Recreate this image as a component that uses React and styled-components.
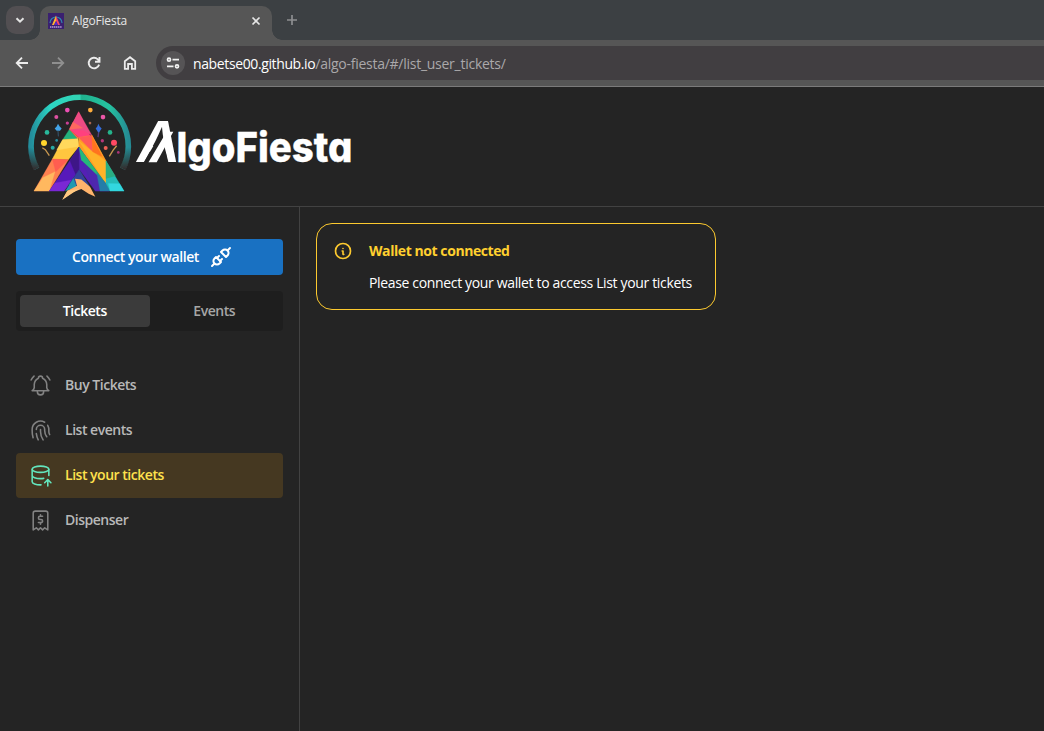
import React from "react";
import styled, { createGlobalStyle } from "styled-components";
import { TbBellRinging, TbFingerprint, TbReceipt2, TbInfoCircle, TbPlugConnected } from "react-icons/tb";

const GlobalStyle = createGlobalStyle`
  *, *::before, *::after { box-sizing: border-box; }
  body { margin: 0; background: #242424; font-family: "Open Sans", "Noto Sans", sans-serif; overflow: hidden; }
`;

const Window = styled.div`
  display: flex;
  flex-direction: column;
  height: 731px;
  background: #242424;
`;

const TabStrip = styled.div`
  display: flex;
  height: 40px;
  padding: 6px 0 0 6px;
  background: #3c4043;
`;

const TabSearch = styled.button`
  display: grid;
  place-items: center;
  width: 28px;
  height: 28px;
  padding: 0;
  border: 0;
  border-radius: 10px;
  background: #524f52;
  color: #e3e3e3;
`;

const Tab = styled.div`
  position: relative;
  display: flex;
  align-items: center;
  width: 232px;
  height: 34px;
  margin-left: 6px;
  padding: 0 10px 5px 8px;
  border-radius: 10px 10px 0 0;
  background: #565656;
  color: #e6e6e6;
  &::before, &::after {
    content: "";
    position: absolute;
    bottom: 0;
    width: 10px;
    height: 10px;
  }
  &::before { left: -10px; background: radial-gradient(circle at 0 0, transparent 9.5px, #565656 10px); }
  &::after { right: -10px; background: radial-gradient(circle at 100% 0, transparent 9.5px, #565656 10px); }
`;

const TabTitle = styled.span`
  flex: 1;
  margin-left: 8px;
  font-size: 12px;
  letter-spacing: -0.2px;
`;

const NewTab = styled.div`
  display: grid;
  place-items: center;
  width: 28px;
  height: 28px;
  margin-left: 6px;
  color: #8d8f91;
`;

const Toolbar = styled.div`
  display: flex;
  align-items: center;
  height: 47px;
  padding-left: 12px;
  background: #565656;
  border-bottom: 1px solid #7b7b7b;
`;

const NavButton = styled.div`
  display: grid;
  place-items: center;
  width: 20px;
  height: 20px;
  margin-right: 16px;
  color: ${(p) => (p.$dim ? "#8f8f8f" : "#ececec")};
`;

const AddressBar = styled.div`
  display: flex;
  flex: 1;
  align-items: center;
  height: 34px;
  padding-left: 5px;
  border-radius: 17px 0 0 17px;
  background: #413e41;
  color: #aaa8aa;
  font-size: 14px;
  letter-spacing: -0.26px;
`;

const SiteInfo = styled.span`
  display: grid;
  place-items: center;
  width: 24px;
  height: 24px;
  margin-right: 8px;
  border-radius: 50%;
  background: #565456;
  color: #f2f2f2;
`;

const Host = styled.span`
  color: #fff;
  letter-spacing: -0.38px;
`;

const Header = styled.header`
  height: 120px;
  padding: 1px 0 0 20px;
  border-bottom: 1px solid #424242;
  svg { display: block; }
`;

const Body = styled.div`
  display: flex;
  flex: 1;
`;

const Sidebar = styled.nav`
  width: 300px;
  padding: 32px 16px;
  border-right: 1px solid #424242;
`;

const ConnectButton = styled.button`
  display: flex;
  align-items: center;
  justify-content: center;
  gap: 10px;
  width: 267px;
  height: 36px;
  padding: 0 4px 0 10px;
  border: 0;
  border-radius: 4px;
  background: #1971c2;
  color: #fff;
  font: 600 14px "Open Sans", sans-serif;
  letter-spacing: -0.42px;
  span { padding-bottom: 1px; }
`;

const Segmented = styled.div`
  display: flex;
  height: 40px;
  margin: 16px 0 32px;
  padding: 4px;
  border-radius: 4px;
  background: #1e1e1e;
`;

const Segment = styled.div`
  flex: 1;
  border-radius: 4px;
  background: ${(p) => (p.$active ? "#3b3b3b" : "transparent")};
  color: ${(p) => (p.$active ? "#fff" : "#a6a6a6")};
  font-size: 14px;
  font-weight: 600;
  letter-spacing: -0.45px;
  line-height: 32px;
  text-align: center;
`;

const NavItem = styled.a`
  display: flex;
  align-items: center;
  height: 45px;
  padding: 0 12px;
  border-radius: 4px;
  background: ${(p) => (p.$active ? "#453821" : "transparent")};
  color: ${(p) => (p.$active ? "#ffe14d" : "#b8b8b8")};
  font-size: 14px;
  font-weight: 600;
  letter-spacing: -0.48px;
  span { padding-bottom: 2px; }
  svg {
    width: 25px;
    height: 25px;
    margin-right: 12px;
    color: ${(p) => (p.$active ? "#63e6be" : "#828282")};
    stroke-width: 1.5;
  }
`;

const Main = styled.main`
  padding: 16px;
`;

const Alert = styled.section`
  display: flex;
  width: 400px;
  height: 87px;
  padding: 17px 16px;
  border: 1px solid #fcc92f;
  border-radius: 16px;
  > svg { color: #fcc92f; margin-right: 16px; }
`;

const AlertTitle = styled.div`
  height: 20px;
  color: #ffd02f;
  font-size: 14px;
  font-weight: 700;
  line-height: 20px;
  letter-spacing: -0.43px;
`;

const AlertText = styled.div`
  margin-top: 12px;
  color: #fff;
  font-size: 14px;
  line-height: 20px;
  letter-spacing: -0.345px;
  white-space: nowrap;
`;

const Glyph = ({ size = 16, box = 16, width = 2, children }) => (
  <svg width={size} height={size} viewBox={`0 0 ${box} ${box}`} fill="none" stroke="currentColor" strokeWidth={width}>
    {children}
  </svg>
);

const DatabaseUp = () => (
  <svg viewBox="0 0 24 24" fill="none" stroke="currentColor" strokeLinecap="round" strokeLinejoin="round">
    <path d="M4 6c0 1.657 3.582 3 8 3s8-1.343 8-3-3.582-3-8-3-8 1.343-8 3" />
    <path d="M4 6v6c0 1.657 3.582 3 8 3 1.1 0 2.1-.08 3.1-.23M20 12V6M4 12v6c0 1.657 3.582 3 8 3 .17 0 .34 0 .5-.01M19 22v-6M22 19l-3-3-3 3" />
  </svg>
);

const Favicon = () => (
  <svg width="16" height="16" viewBox="0 0 16 16">
    <rect width="16" height="16" fill="#3a2070" />
    <path d="M2 10A6 6 0 0 1 14 10" fill="none" stroke="#2f87ad" strokeWidth="1.2" />
    <path d="M8 2.5L4 12h2l2-4z" fill="#ffb52d" />
    <path d="M8 2.5L12 12h-2L8 8z" fill="#f0476a" />
    <path d="M8 8l-2 4h4z" fill="#5727c8" />
    <path d="M2 14h12" stroke="#b39bd6" strokeWidth="1.3" strokeDasharray="1.4 .5" />
  </svg>
);

const dots = [
  [142, 65, 7, "#ed4fb4"], [109, 86, 6, "#df51a2"], [142, 104, 5, "#c93f94"], [81, 132, 7, "#29b99c"],
  [72, 164, 9, "#ffd52d"], [98, 178, 6, "#28aaa5"], [110, 156, 4, "#258e9f"], [211, 65, 7, "#ffae3d"],
  [249, 86, 7, "#ed57a8"], [210, 104, 4, "#aa654b"], [270, 132, 7, "#25b38b"], [247, 157, 5, "#b6377a"],
  [282, 163, 9, "#ff4963"], [257, 179, 6, "#ed6156"], [295, 192, 4, "#aa3476"],
];

const facets = [
  ["176,70 148,123 177,147 218,158", "#ff407e"],
  ["176,70 148,123 190,126 216,141", "#ef4b83"],
  ["159,101 148,123 188,119", "#ff695f"],
  ["148,123 128,154 174,151", "#23b17c"],
  ["148,123 177,147 174,152", "#ff6b43"],
  ["128,154 174,151 177,174 145,214 97,212", "#ffc63f"],
  ["128,154 110,185 177,174 174,151", "#ffd85c"],
  ["97,212 145,214 88,308 42,308", "#ff8050"],
  ["97,212 145,214 107,250", "#ff5d50"],
  ["42,308 68,268 105,250 88,308", "#ffb85f"],
  ["176,147 216,141 258,218 258,286 177,176", "#ff9c25"],
  ["216,141 176,147 218,190", "#ff5a58"],
  ["218,190 177,158 258,286 258,218", "#ffb329"],
  ["216,141 248,205 218,190", "#ff741f"],
  ["216,141 258,218 248,205", "#ff9c25"],
  ["177,176 88,308 132,308 178,243", "#5719ba"],
  ["177,176 150,217 167,258 178,243", "#3e1687"],
  ["105,284 88,308 132,308 155,275", "#7a28d4"],
  ["177,176 268,308 226,308 178,243", "#5520b5"],
  ["177,176 184,216 258,286", "#24b77b"],
  ["184,216 226,308 268,308 258,286", "#4d27ae"],
  ["230,252 258,286 270,308 240,308", "#247da8"],
  ["258,218 258,286 270,308 312,308", "#24bcb7"],
  ["258,218 258,270 286,263", "#29ad83"],
  ["265,285 270,308 312,308 299,286", "#32d7df"],
  ["178,243 145,290 208,292", "#34439b"],
  ["160,270 136,308 170,296", "#209ab0"],
];

const Brand = () => (
  <svg width="360" height="118" viewBox="20 88 360 118" aria-label="AlgoFiesta">
    <defs>
      <linearGradient id="hue" x1="0" x2="1">
        <stop offset="0" stopColor="#238d9c" />
        <stop offset=".2" stopColor="#2cd6c4" />
        <stop offset=".5" stopColor="#32d3b3" />
        <stop offset=".52" stopColor="#20b18e" />
        <stop offset=".8" stopColor="#25c3a0" />
        <stop offset="1" stopColor="#258b94" />
      </linearGradient>
      <linearGradient id="fade" x1="0" y1="0" x2="0" y2="1">
        <stop offset=".7" stopColor="#242424" stopOpacity="0" />
        <stop offset="1" stopColor="#34292a" stopOpacity=".95" />
      </linearGradient>
    </defs>
    <g transform="translate(20 88.4) scale(.33333)">
      <path d="M50 241A146 146 0 1 1 308 241" fill="none" stroke="url(#hue)" strokeWidth="17" />
      <path d="M50 241A146 146 0 1 1 308 241" fill="none" stroke="url(#fade)" strokeWidth="19" />
      {dots.map(([x, y, r, c]) => <circle key={`${x}-${y}`} cx={x} cy={y} r={r} fill={c} />)}
      <path d="M114 106l5 8 6 6-5 7h-10l-6-7 6-6z" fill="#43a4e8" />
      <path d="M114 127l1 17" stroke="#355771" strokeWidth="3" />
      <path d="M235 106l4 8 6 6-5 8-4 7-4-7-5-8 5-6z" fill="#346dda" />
      <path d="M236 132l-2 14" stroke="#573d79" strokeWidth="4" />
      <path d="M67 178l9 6 12 18M290 172l-11 14-11 18" fill="none" stroke="#c89850" strokeWidth="4" />
      {facets.map(([points, fill], i) => <polygon key={i} points={points} fill={fill} stroke={fill} strokeWidth=".8" />)}
      <path d="M165 271l19 2 12 10 14 12 16 30-20-9-22-14-24 9-33 23 15-27 29-15z" fill="#ffb36b" />
      <path d="M178 302l-18 10-33 22 15-27z" fill="#ffc981" />
    </g>
    <g fill="#fff" fontFamily="Inter, sans-serif">
      <text transform="translate(161.5 162.3) skewX(-10)" fontSize="56.5" fontWeight="600" textAnchor="middle" x="-5.5" y="0" textLength="43" lengthAdjust="spacingAndGlyphs">A</text>
      <path d="M160.2 134.5L143.5 162.8H168.5L162.3 138Z" fill="#242424" />
      <path d="M148.5 162.3L165 134.5L167.5 131.7H173.3L170 137.7L156.7 162.3Z" />
      <text x="176.5" y="162.3" fontSize="41" fontWeight="800" stroke="#fff" strokeWidth=".35" textLength="176" lengthAdjust="spacingAndGlyphs" style={{ fontFeatureSettings: '"cv11" 1, "ss03" 1' }}>lgoFiesta</text>
    </g>
  </svg>
);

export default function App() {
  return (
    <Window>
      <GlobalStyle />
      <TabStrip>
        <TabSearch><Glyph><path d="M4.5 6.2L8 9.7l3.5-3.5" /></Glyph></TabSearch>
        <Tab>
          <Favicon />
          <TabTitle>AlgoFiesta</TabTitle>
          <Glyph size={12} box={12} width={1.7}><path d="M2.5 2.5l7 7M9.5 2.5l-7 7" /></Glyph>
        </Tab>
        <NewTab><Glyph width={1.7}><path d="M8 3v10M3 8h10" /></Glyph></NewTab>
      </TabStrip>
      <Toolbar>
        <NavButton><Glyph width={1.8}><path d="M14 8H3M8 2.7L2.7 8 8 13.3" /></Glyph></NavButton>
        <NavButton $dim><Glyph width={1.8}><path d="M2 8h11M8 2.7L13.3 8 8 13.3" /></Glyph></NavButton>
        <NavButton><Glyph width={1.9}><path d="M13.1 9.6A5.3 5.3 0 1 1 11.8 4.3L13.4 6M13.5 2v4.7H9" /></Glyph></NavButton>
        <NavButton><Glyph width={1.8}><path d="M2.8 6.2L8 2.2l5.2 4v7.6H9.9V9H6.1v4.8H2.8z" /></Glyph></NavButton>
        <AddressBar>
          <SiteInfo>
            <Glyph width={1.7}>
              <circle cx="4" cy="4.7" r="1.5" /><path d="M7.5 4.7H14M2 11.3h6.5" /><circle cx="12" cy="11.3" r="1.5" />
            </Glyph>
          </SiteInfo>
          <Host>nabetse00.github.io</Host>/algo-fiesta/#/list_user_tickets/
        </AddressBar>
      </Toolbar>
      <Header><Brand /></Header>
      <Body>
        <Sidebar>
          <ConnectButton><span>Connect your wallet</span><TbPlugConnected size={24} /></ConnectButton>
          <Segmented>
            <Segment $active>Tickets</Segment>
            <Segment>Events</Segment>
          </Segmented>
          <NavItem><TbBellRinging /><span>Buy Tickets</span></NavItem>
          <NavItem><TbFingerprint /><span>List events</span></NavItem>
          <NavItem $active><DatabaseUp /><span>List your tickets</span></NavItem>
          <NavItem><TbReceipt2 /><span>Dispenser</span></NavItem>
        </Sidebar>
        <Main>
          <Alert>
            <TbInfoCircle size={20} />
            <div>
              <AlertTitle>Wallet not connected</AlertTitle>
              <AlertText>Please connect your wallet to access List your tickets</AlertText>
            </div>
          </Alert>
        </Main>
      </Body>
    </Window>
  );
}
